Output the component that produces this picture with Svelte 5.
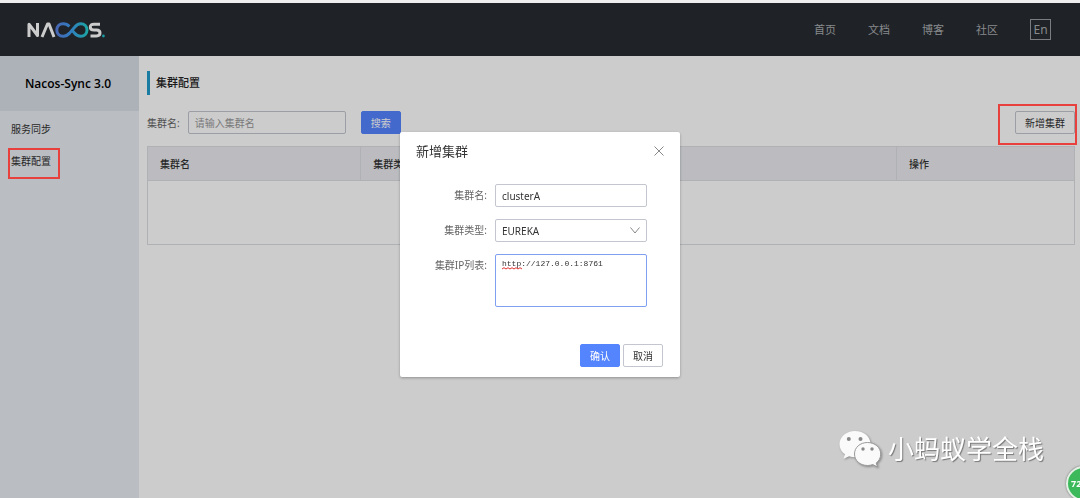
<script>
  const nav = ['首页', '文档', '博客', '社区']
  const menu = ['服务同步', '集群配置']
  const columns = ['集群名', '集群类型', '', '操作']

  let active = $state('集群配置')
  let open = $state(true)
  let keyword = $state('')
  let form = $state({
    name: 'clusterA',
    type: 'EUREKA',
    servers: 'http://127.0.0.1:8761'
  })
</script>

<div class="page">
  <header>
    <a class="logo" href="#home" aria-label="Nacos">
      <svg width="78" height="16" viewBox="0 0 78 16" fill="none" stroke-width="3">
        <defs>
          <linearGradient id="loop" x1="29" y1="0" x2="61" y2="0" gradientUnits="userSpaceOnUse">
            <stop offset="0" stop-color="#5a80e0" />
            <stop offset="0.45" stop-color="#3f9bf0" />
            <stop offset="1" stop-color="#22d0cc" />
          </linearGradient>
        </defs>
        <path d="M2 15V2.2L10.500 13.5V1" stroke="#fff" stroke-linejoin="round" />
        <path d="M15 15L20.5 2H22L27 15" stroke="#fff" stroke-linejoin="round" />
        <path d="M42.4 4.6C40.6 2.6 38.6 1.8 36.2 1.8C32.200 1.800 29.800 4.400 29.800 8S32.200 14.200 36.200 14.200C39 14.200 40.800 13 42.600 11.100L47.600 5.200C49.300 3.100 51 1.800 53.600 1.800C57.600 1.800 60 4.400 60 8S57.600 14.200 53.600 14.200C51 14.200 49.200 13.100 47.400 11L45.200 8.400" stroke="url(#loop)" />
        <path d="M73 2.2H67C64.5 2.2 63.3 3.2 63.3 5C63.3 7 64.5 8 67 8H69.5C72 8 73 9 73 11C73 13 72 13.9 69.5 13.9H63.5" stroke="#fff" />
        <circle cx="76.4" cy="14" r="1.4" fill="#22c0cc" />
      </svg>
    </a>
    <nav>
      {#each nav as item}
        <a href="#nav">{item}</a>
      {/each}
      <button class="lang">En</button>
    </nav>
  </header>

  <div class="body">
    <aside>
      <h1>Nacos-Sync 3.0</h1>
      <ul>
        {#each menu as item}
          <li class:marked={active === item}>
            <a href="#menu" onclick={() => (active = item)}>{item}</a>
          </li>
        {/each}
      </ul>
    </aside>

    <main>
      <h2>集群配置</h2>
      <div class="toolbar">
        <label for="keyword">集群名:</label>
        <input id="keyword" type="text" placeholder="请输入集群名" bind:value={keyword} />
        <button class="btn primary">搜索</button>
        <div class="add marked">
          <button class="btn" onclick={() => (open = true)}>新增集群</button>
        </div>
      </div>
      <table>
        <thead>
          <tr>
            {#each columns as column}
              <th>{column}</th>
            {/each}
          </tr>
        </thead>
        <tbody>
          <tr><td colspan="4"></td></tr>
        </tbody>
      </table>
    </main>
  </div>
</div>

{#if open}
  <div class="mask">
    <div class="dialog" role="dialog" aria-labelledby="dialog-title">
      <div class="dialog-head">
        <h3 id="dialog-title">新增集群</h3>
        <button class="close" aria-label="关闭" onclick={() => (open = false)}>
          <svg width="10" height="10" viewBox="0 0 10 10" stroke="#888" fill="none">
            <path d="M0.5 0.5L9.5 9.5M9.5 0.5L0.5 9.5" />
          </svg>
        </button>
      </div>
      <div class="form">
        <label for="name">集群名:</label>
        <input id="name" type="text" bind:value={form.name} />
        <label for="type">集群类型:</label>
        <div class="field">
          <select id="type" bind:value={form.type}>
            <option>EUREKA</option>
          </select>
          <svg class="arrow" width="10" height="7" viewBox="0 0 10 7" stroke="#888" fill="none">
            <path d="M0.5 0.5L5 6L9.5 0.5" />
          </svg>
        </div>
        <label for="servers">集群IP列表:</label>
        <div class="field">
          <textarea id="servers" spellcheck="false" bind:value={form.servers}></textarea>
          <svg class="squiggle" width="20" height="3" viewBox="0 0 20 3" stroke="#e03030" fill="none">
            <path d="M0 2L2 0.7L4 2L6 0.7L8 2L10 0.7L12 2L14 0.7L16 2L18 0.7L20 2" />
          </svg>
        </div>
      </div>
      <div class="dialog-foot">
        <button class="btn primary">确认</button>
        <button class="btn" onclick={() => (open = false)}>取消</button>
      </div>
    </div>
  </div>
{/if}

<div class="watermark">
  <svg width="44" height="38" viewBox="0 0 44 38">
    <path d="M16 1C7.500 1 0.500 6.800 0.500 14.200C0.500 18.500 2.700 22 6 24.300L4.500 28.800L10.100 26.200C12 26.800 14 27.200 16 27.200C25 27.200 31.500 21.500 31.500 14.200C31.500 6.800 25 1 16 1Z" fill="#fafafa" />
    <path d="M28.500 12.500C21 12.500 15.500 17.500 15.500 24C15.500 30.500 21 35.500 28.500 35.500C30.400 35.500 32.200 35.200 33.800 34.600L38.500 37L37.200 33C40 31 41.700 27.800 41.700 24C41.700 17.500 36 12.500 28.500 12.500Z" fill="#fafafa" stroke="#999" />
    <g fill="#888">
      <circle cx="9.800" cy="9" r="2" />
      <circle cx="21.500" cy="9" r="2" />
      <circle cx="24" cy="19" r="1.700" />
      <circle cx="33" cy="19" r="1.700" />
    </g>
  </svg>
  <span>小蚂蚁学全栈</span>
</div>

<div class="ball">72</div>

<style>
:global(body) {
  margin: 0;
  overflow: hidden;
  font-family: "Noto Sans", "Noto Sans CJK SC", sans-serif;
  font-size: 10px;
  color: #333;
}

*,
*::after {
  box-sizing: border-box;
}

.page {
  display: flex;
  flex-direction: column;
  min-height: 100vh;
  background: #fff;
}

header {
  display: flex;
  align-items: center;
  justify-content: space-between;
  height: 56px;
  padding: 0 29px 0 27px;
  background: #272b30;
  border-top: 3px solid #eee;
}

.logo {
  display: flex;
}

nav {
  display: flex;
  align-items: center;
  gap: 32px;
}

nav a {
  color: #aaadb0;
  font-size: 11px;
  line-height: 20px;
  text-decoration: none;
}

.lang {
  width: 21px;
  height: 21px;
  padding: 0;
  background: none;
  border: 1px solid #999ca0;
  color: #aaadb0;
  font: inherit;
  font-size: 12px;
  line-height: 16px;
}

.body {
  display: flex;
  flex: 1;
}

aside {
  flex: none;
  width: 139px;
  background: #e9edf2;
}

h1 {
  margin: 0;
  height: 55px;
  padding-right: 3px;
  background: #d9dee6;
  color: #000;
  font-family: "Open Sans", "Noto Sans", sans-serif;
  font-size: 12px;
  font-weight: 600;
  line-height: 55px;
  text-align: center;
}

ul {
  margin: 0;
  padding: 2px 0;
  list-style: none;
}

li a {
  display: block;
  padding-left: 11px;
  color: #333;
  line-height: 32px;
  text-decoration: none;
}

.marked {
  position: relative;
}

.marked::after {
  content: "";
  position: absolute;
  z-index: 20;
  border: 2px solid #e8403c;
  pointer-events: none;
}

li.marked::after {
  top: 3px;
  left: 8px;
  width: 52px;
  height: 31px;
}

.add.marked::after {
  inset: -7px -2px -11px -17px;
}

main {
  flex: 1;
  padding: 15px 5px 15px 8px;
}

h2 {
  margin: 0 0 16px;
  padding-left: 6px;
  border-left: 3px solid #209bc8;
  color: #222;
  font-size: 11px;
  font-weight: 500;
  line-height: 24px;
}

.toolbar {
  display: flex;
  align-items: center;
  margin-bottom: 12px;
}

label {
  color: #666;
}

.toolbar input {
  width: 158px;
  margin: 0 15px 0 8px;
}

.add {
  margin-left: auto;
}

input,
select,
textarea {
  display: block;
  width: 100%;
  height: 23px;
  margin: 0;
  padding: 0 6px;
  background: #fff;
  border: 1px solid #c4c6cf;
  border-radius: 2px;
  outline: 0;
  color: #333;
  font: inherit;
}

input::placeholder {
  color: #999;
}

select {
  appearance: none;
}

.btn {
  display: block;
  height: 23px;
  padding: 0 9px;
  background: #fff;
  border: 1px solid #c4c6cf;
  border-radius: 2px;
  color: #333;
  font: inherit;
  line-height: 20px;
  cursor: pointer;
}

.btn.primary {
  background: #5584ff;
  border-color: #5584ff;
  color: #fff;
}

table {
  width: 100%;
  border: 1px solid #dcdee3;
  border-collapse: collapse;
  table-layout: fixed;
}

th {
  height: 34px;
  padding: 0 12px;
  background: #ebecf0;
  border: 1px solid #dcdee3;
  font-weight: 500;
  text-align: left;
}

th:nth-child(1),
th:nth-child(2) {
  width: 23%;
}

th:nth-child(4) {
  width: 178px;
}

td {
  height: 64px;
}

.mask {
  position: fixed;
  inset: 0;
  z-index: 10;
  top: 3px;
  display: flex;
  align-items: flex-start;
  justify-content: center;
  padding-top: 129px;
  background: rgba(0, 0, 0, 0.2);
}

.dialog {
  width: 280px;
  background: #fff;
  border-radius: 2px;
  box-shadow: 0 1px 3px rgba(0, 0, 0, 0.3);
}

.dialog-head {
  display: flex;
  align-items: center;
  justify-content: space-between;
  padding: 8px 16px 0 16px;
}

h3 {
  margin: 0;
  font-size: 13px;
  font-weight: 400;
  line-height: 22px;
}

.close {
  display: flex;
  padding: 0;
  background: none;
  border: 0;
  cursor: pointer;
}

.form {
  display: grid;
  grid-template-columns: 71px 1fr;
  gap: 12px 8px;
  padding: 22px 33px 0 16px;
}

.form label {
  line-height: 23px;
  text-align: right;
}

.field {
  position: relative;
}

.arrow {
  position: absolute;
  top: 8px;
  right: 7px;
  pointer-events: none;
}

textarea {
  height: 53px;
  padding: 3px 6px;
  border-color: #7f9ff0;
  font-family: "Liberation Mono", monospace;
  font-size: 8px;
  line-height: 12px;
  resize: none;
}

.squiggle {
  position: absolute;
  top: 13px;
  left: 7px;
}

.dialog-foot {
  display: flex;
  justify-content: flex-end;
  gap: 3px;
  padding: 37px 17px 10px;
}

.watermark {
  position: fixed;
  right: 36px;
  bottom: 30px;
  z-index: 15;
  display: flex;
  align-items: center;
  gap: 5px;
  color: #fff;
  font-size: 26px;
  line-height: 38px;
  text-shadow: 1px 1px 1px #777;
}

.watermark svg {
  filter: drop-shadow(1px 1px 1px #888);
}

.ball {
  position: fixed;
  right: -21px;
  bottom: -3px;
  z-index: 15;
  width: 35px;
  height: 35px;
  padding-left: 3px;
  background: #3cb95a;
  border: 2px solid #e4f2e6;
  border-radius: 50%;
  box-shadow: 0 0 2px #666;
  color: #fff;
  font-size: 9px;
  font-weight: 700;
  line-height: 31px;
}
</style>
